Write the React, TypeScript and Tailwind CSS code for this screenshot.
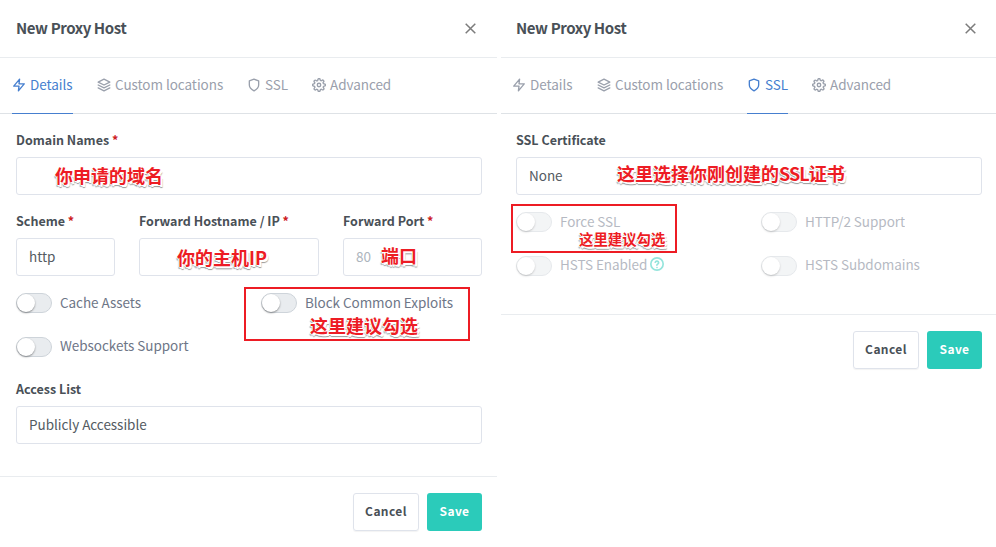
import type { ReactNode } from 'react';

type IconName = 'zap' | 'layers' | 'shield' | 'settings';

function Icon({ name }: { name: IconName }) {
  return (
    <svg
      className="shrink-0"
      width="14"
      height="14"
      viewBox="0 0 24 24"
      fill="none"
      stroke="currentColor"
      strokeWidth="2.3"
      strokeLinecap="round"
      strokeLinejoin="round"
    >
      {name === 'zap' && <path d="M13 2 3 14h9l-1 8 10-12h-9l1-8z" />}
      {name === 'layers' && (
        <>
          <path d="M12 2 2 7l10 5 10-5-10-5z" />
          <path d="m2 17 10 5 10-5" />
          <path d="m2 12 10 5 10-5" />
        </>
      )}
      {name === 'shield' && <path d="M12 22s8-4 8-10V5l-8-3-8 3v7c0 6 8 10 8 10z" />}
      {name === 'settings' && (
        <>
          <circle cx="12" cy="12" r="3" />
          <path d="M19.4 15a1.65 1.65 0 0 0 .33 1.82l.06.06a2 2 0 0 1-2.83 2.83l-.06-.06a1.65 1.65 0 0 0-2.8 1.17V21a2 2 0 0 1-4 0v-.09A1.65 1.65 0 0 0 9 19.4a1.65 1.65 0 0 0-1.82.33l-.06.06a2 2 0 0 1-2.83-2.83l.06-.06A1.65 1.65 0 0 0 3.18 14H3a2 2 0 0 1 0-4h.09A1.65 1.65 0 0 0 4.6 9a1.65 1.65 0 0 0-.33-1.82l-.06-.06a2 2 0 0 1 2.83-2.83l.06.06A1.65 1.65 0 0 0 10 3.18V3a2 2 0 0 1 4 0v.09a1.65 1.65 0 0 0 2.8 1.17l.06-.06a2 2 0 0 1 2.83 2.83l-.06.06A1.65 1.65 0 0 0 20.91 10H21a2 2 0 0 1 0 4h-.09a1.65 1.65 0 0 0-1.51 1z" />
        </>
      )}
    </svg>
  );
}

const tabs: { label: string; icon: IconName; width: string }[] = [
  { label: 'Details', icon: 'zap', width: 'w-[61px]' },
  { label: 'Custom locations', icon: 'layers', width: 'w-[126px]' },
  { label: 'SSL', icon: 'shield', width: 'w-[41px]' },
  { label: 'Advanced', icon: 'settings', width: 'w-20' },
];

function Header({ padding }: { padding: string }) {
  return (
    <header className={`flex h-[58px] items-center justify-between border-b border-[#e9ecef] ${padding}`}>
      <h5 className="pb-0.5 text-[15px] leading-6 font-bold tracking-[-0.4px] text-[#495057]">New Proxy Host</h5>
      <svg width="13" height="13" viewBox="0 0 13 13" fill="none" stroke="#7c7c7c" strokeWidth="1.5">
        <path d="m1.7 1.7 9.6 9.6M11.3 1.7 1.7 11.3" />
      </svg>
    </header>
  );
}

function Tabs({ active, padding }: { active: string; padding: string }) {
  return (
    <nav className={`flex h-14 gap-6 border-b border-[#dee2e6] ${padding}`}>
      {tabs.map((t) => (
        <div
          key={t.label}
          className={`-mb-px flex items-center gap-1 border-b pb-px whitespace-nowrap ${t.width} ${
            t.label === active ? 'border-[#467fcf] text-[#467fcf]' : 'border-transparent text-[#9aa0ac]'
          }`}
        >
          <Icon name={t.icon} />
          <span className="pb-0.5 text-[13.5px] leading-5 tracking-[-0.05px]">{t.label}</span>
        </div>
      ))}
    </nav>
  );
}

function Field({ label, required, value, muted, width = 'w-full' }: {
  label: string;
  required?: boolean;
  value?: string;
  muted?: boolean;
  width?: string;
}) {
  return (
    <div className={width}>
      <div className="mb-2 h-[18px] text-[12.5px] leading-[18px] font-bold whitespace-nowrap text-[#495057]">
        {label}
        {required && <span className="text-[#cd201f]"> *</span>}
      </div>
      <div
        className={`flex h-[38px] items-center rounded-[3px] border border-[#dfe3eb] px-3 pb-0.5 text-[13.5px] leading-5 tracking-[-0.03px] ${
          muted ? 'text-[#adb5bd]' : 'text-[#545b62]'
        }`}
      >
        {value}
      </div>
    </div>
  );
}

function Switch({ label, disabled, lift = 'pb-0.5', children }: {
  label: string;
  disabled?: boolean;
  lift?: string;
  children?: ReactNode;
}) {
  return (
    <div className={`flex h-5 w-[245px] shrink-0 items-center ${disabled ? 'opacity-50' : ''}`}>
      <span className="flex h-5 w-9 shrink-0 items-center rounded-full border border-[#ced4da] bg-[#e9ecef]">
        <span className="size-[18px] rounded-full bg-white shadow-[0_1px_2px_rgba(0,0,0,0.4)]" />
      </span>
      <span className={`ml-2 flex items-center gap-[3px] text-[13.5px] leading-5 tracking-[-0.05px] whitespace-nowrap text-[#6e7687] ${lift}`}>
        {label}
        {children}
      </span>
    </div>
  );
}

function Footer({ padding }: { padding: string }) {
  return (
    <footer className={`flex h-[71px] justify-end gap-2 border-t border-[#e9ecef] pt-4 text-[12px] leading-5 font-bold tracking-[0.4px] ${padding}`}>
      <button className="flex h-[38px] w-[66px] items-center justify-center rounded-[3px] border border-[#dfe3eb] pb-0.5 text-[#495057] shadow-[0_1px_1px_rgba(0,0,0,0.05)]">
        Cancel
      </button>
      <button className="flex h-[38px] w-[55px] items-center justify-center rounded-[3px] bg-[#2bcbba] pb-0.5 text-white">
        Save
      </button>
    </footer>
  );
}

function Note({ place, size = 'text-[18px]', children }: { place: string; size?: string; children: ReactNode }) {
  return (
    <div
      className={`absolute font-bold whitespace-nowrap text-[#ed1c24] [text-shadow:1px_0_#fff,-1px_0_#fff,0_1px_#fff,0_-1px_#fff,2px_2px_#fff,2px_3px_1px_#999,-1px_2px_1px_#aaa] ${size} ${place}`}
    >
      {children}
    </div>
  );
}

export default function App() {
  return (
    <main className="relative flex h-[547px] w-[996px] overflow-hidden bg-white font-['Noto_Sans_CJK_SC',sans-serif]">
      <section className="mr-1 w-[497px]">
        <Header padding="pr-5 pl-4" />
        <Tabs active="Details" padding="pl-3" />
        <div className="h-[362px] pt-[17px] pr-[15px] pl-4">
          <Field label="Domain Names" required />
          <div className="mt-[17px] flex gap-6">
            <Field label="Scheme" required value="http" width="w-[99px]" />
            <Field label="Forward Hostname / IP" required width="w-[180px]" />
            <Field label="Forward Port" required value="80" muted width="w-[139px]" />
          </div>
          <div className="mt-[17px] flex">
            <Switch label="Cache Assets" />
            <Switch label="Block Common Exploits" />
          </div>
          <div className="mt-6 mb-[23px]">
            <Switch label="Websockets Support" lift="pb-1" />
          </div>
          <Field label="Access List" value="Publicly Accessible" />
        </div>
        <Footer padding="pr-[15px]" />
      </section>

      <section className="w-[495px]">
        <Header padding="pr-[19px] pl-[15px]" />
        <Tabs active="SSL" padding="pl-[11px]" />
        <div className="h-[200px] pt-[17px] pr-[14px] pl-[15px]">
          <Field label="SSL Certificate" value="None" />
          <div className="mt-[17px] flex">
            <Switch label="Force SSL" disabled />
            <Switch label="HTTP/2 Support" disabled />
          </div>
          <div className="mt-6 flex">
            <Switch label="HSTS Enabled" disabled lift="pb-1">
              <svg className="mb-px" width="14" height="14" viewBox="0 0 24 24" fill="none" stroke="#2bcbba" strokeWidth="2.8" strokeLinecap="round" strokeLinejoin="round">
                <circle cx="12" cy="12" r="10.6" />
                <path d="M9 9a3 3 0 0 1 5.8 1c0 2-3 2.3-3 4" />
                <path d="M12 18h.01" />
              </svg>
            </Switch>
            <Switch label="HSTS Subdomains" disabled lift="pb-1" />
          </div>
        </div>
        <Footer padding="pr-[14px]" />
      </section>

      <div className="absolute top-[287px] left-[244px] h-[54px] w-[226px] border-2 border-[#ed1c24]" />
      <div className="absolute top-[204px] left-[511px] h-[49px] w-[166px] border-2 border-[#ed1c24]" />
      <Note place="top-[163px] left-[55px] leading-6">你申请的域名</Note>
      <Note place="top-[245px] left-[177px] leading-6">你的主机IP</Note>
      <Note place="top-[243px] left-[381px] leading-6">端口</Note>
      <Note place="top-[313px] left-[310px] leading-6">这里建议勾选</Note>
      <Note place="top-[161px] left-[617px] leading-6">
        这里选择你刚创建的<span className="tracking-[-0.9px]">SSL</span>证书
      </Note>
      <Note place="top-[231px] left-[579px] leading-4" size="text-[14.4px]">这里建议勾选</Note>
    </main>
  );
}
